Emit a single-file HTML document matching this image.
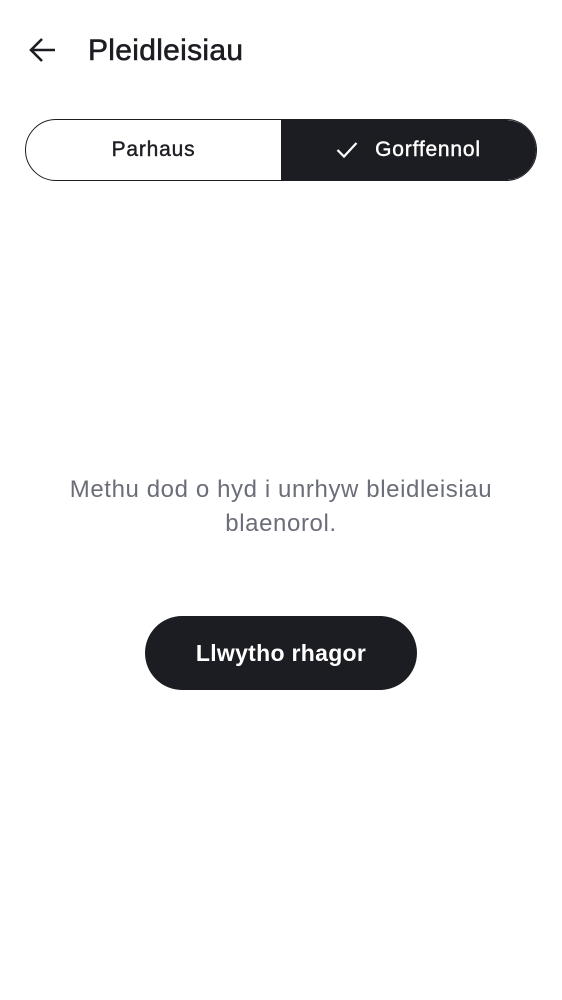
<!DOCTYPE html>
<html><head><meta charset="utf-8"><style>
body{margin:0;width:562px;height:1000px;background:#fff;font-family:"Liberation Sans",sans-serif;position:relative;overflow:hidden}
.t{position:absolute;left:88px;top:34px;font-size:30px;color:#1c1d22;-webkit-text-stroke:0.6px #1c1d22;letter-spacing:0.3px}
.seg{position:absolute;left:25px;top:119px;width:510px;height:60px;border:1.5px solid #1c1d22;border-radius:31px;overflow:hidden;display:flex}
.seg div{flex:1;display:flex;align-items:center;justify-content:center;font-size:21px;letter-spacing:0.8px;-webkit-text-stroke:0.4px currentColor}
.seg .l{color:#1c1d22}
.seg .on{background:#1c1d22;color:#fff}
.msg{position:absolute;left:0;width:562px;top:473px;text-align:center;font-size:24px;letter-spacing:0.6px;line-height:34px;color:#6b6e78}
.btn{position:absolute;left:145px;top:616px;width:272px;height:74px;border-radius:37px;background:#1c1d22;color:#fff;font-size:23px;font-weight:bold;letter-spacing:0.3px;display:flex;align-items:center;justify-content:center}
</style></head><body>
<svg style="position:absolute;left:29px;top:37px" width="28" height="26" viewBox="0 0 28 26"><path d="M26 13H3M13 2L2 13l11 11" stroke="#1c1d22" stroke-width="2.6" fill="none"/></svg>
<div class="t">Pleidleisiau</div>
<div class="seg"><div class="l">Parhaus</div><div class="on"><svg width="22" height="18" viewBox="0 0 22 18" style="margin-right:17px"><path d="M1.5 9l6.5 6.5L20.5 2" stroke="#fff" stroke-width="2.2" fill="none"/></svg>Gorffennol</div></div>
<div class="msg">Methu dod o hyd i unrhyw bleidleisiau<br>blaenorol.</div>
<div class="btn">Llwytho rhagor</div>
</body></html>
